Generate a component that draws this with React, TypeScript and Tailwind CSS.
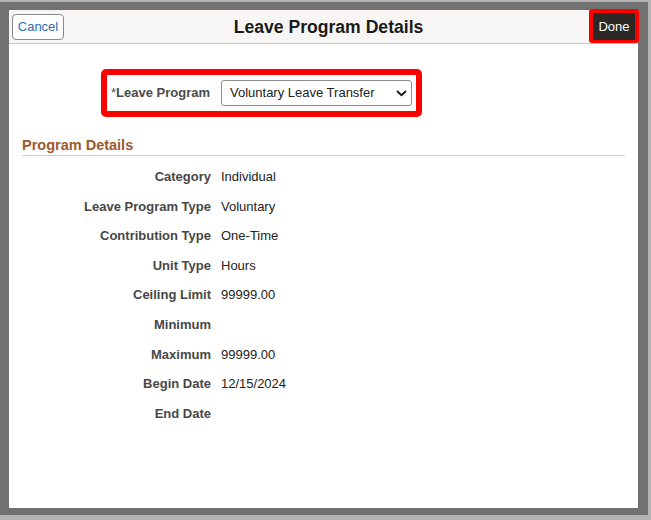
const rows: [string, string][] = [
  ['Category', 'Individual'],
  ['Leave Program Type', 'Voluntary'],
  ['Contribution Type', 'One-Time'],
  ['Unit Type', 'Hours'],
  ['Ceiling Limit', '99999.00'],
  ['Minimum', ''],
  ['Maximum', '99999.00'],
  ['Begin Date', '12/15/2024'],
  ['End Date', ''],
]

const ChevronDown = () => (
  <svg width="11" height="7" viewBox="0 0 11 7" fill="none">
    <path d="M1.5 1.5 L5.5 5.2 L9.5 1.5" stroke="#222" strokeWidth="2" strokeLinecap="round" strokeLinejoin="round" />
  </svg>
)

const App = () => {
  return (
    <div
      className="w-[651px] h-[520px] overflow-hidden bg-[#717171] border-t-2 border-r-[3px] border-b-[5px] border-[#b3b3b3] pt-[8px] pl-[9px]"
      style={{ fontFamily: '"Liberation Sans", Arial, sans-serif' }}
    >
      <div className="w-[629px] h-[498px] bg-white flex flex-col">
        <header className="relative h-[34px] shrink-0 bg-[#f7f6f5] border-b border-[#c9c9c9] flex items-center justify-center">
          <button className="absolute left-[3px] top-[4px] h-[26px] w-[52px] rounded-[4px] border border-[#8a8a8a] bg-white text-[13px] text-[#2c6db3]">
            Cancel
          </button>
          <h1 className="text-[17.6px] font-bold text-[#1b1b1b] pl-[10px] pt-[2px]">Leave Program Details</h1>
          <div className="absolute right-[-1px] top-[-1px] h-[34px] w-[50px] rounded-[3px] bg-[#ff0000] p-[4px] pr-[4px] pb-[3px]">
            <button className="w-full h-full bg-[#2b2825] text-[13px] text-white">Done</button>
          </div>
        </header>

        <div className="pt-[25px] pl-[92px]">
          <div className="w-[321px] h-[48px] rounded-[5px] border-[6px] border-[#ff0000] flex items-center pl-[4px]">
            <label className="w-[110px] text-[13px] font-bold text-[#4b4b4b]">
              <span className="font-normal">*</span>Leave Program
            </label>
            <div className="w-[191px] h-[26px] rounded-[3px] border border-[#8d8d8d] bg-white flex items-center justify-between pl-[8px] pr-[4px]">
              <span className="text-[13px] text-[#222]">Voluntary Leave Transfer</span>
              <ChevronDown />
            </div>
          </div>
        </div>

        <section className="px-[13px] pt-[20px]">
          <h2 className="text-[14.5px] font-bold text-[#9c5a2c] leading-[16px] pb-[2px] border-b border-[#cfcfcf]">
            Program Details
          </h2>
          <div className="grid grid-cols-[189px_auto] gap-x-[10px] auto-rows-[29.6px] pt-[6px]">
            {rows.map(([label, value]) => (
              <div key={label} className="contents">
                <div className="text-right text-[13px] font-bold text-[#474747] flex items-center justify-end">{label}</div>
                <div className="text-[13px] text-[#222] flex items-center">{value}</div>
              </div>
            ))}
          </div>
        </section>
      </div>
    </div>
  )
}

export default App
